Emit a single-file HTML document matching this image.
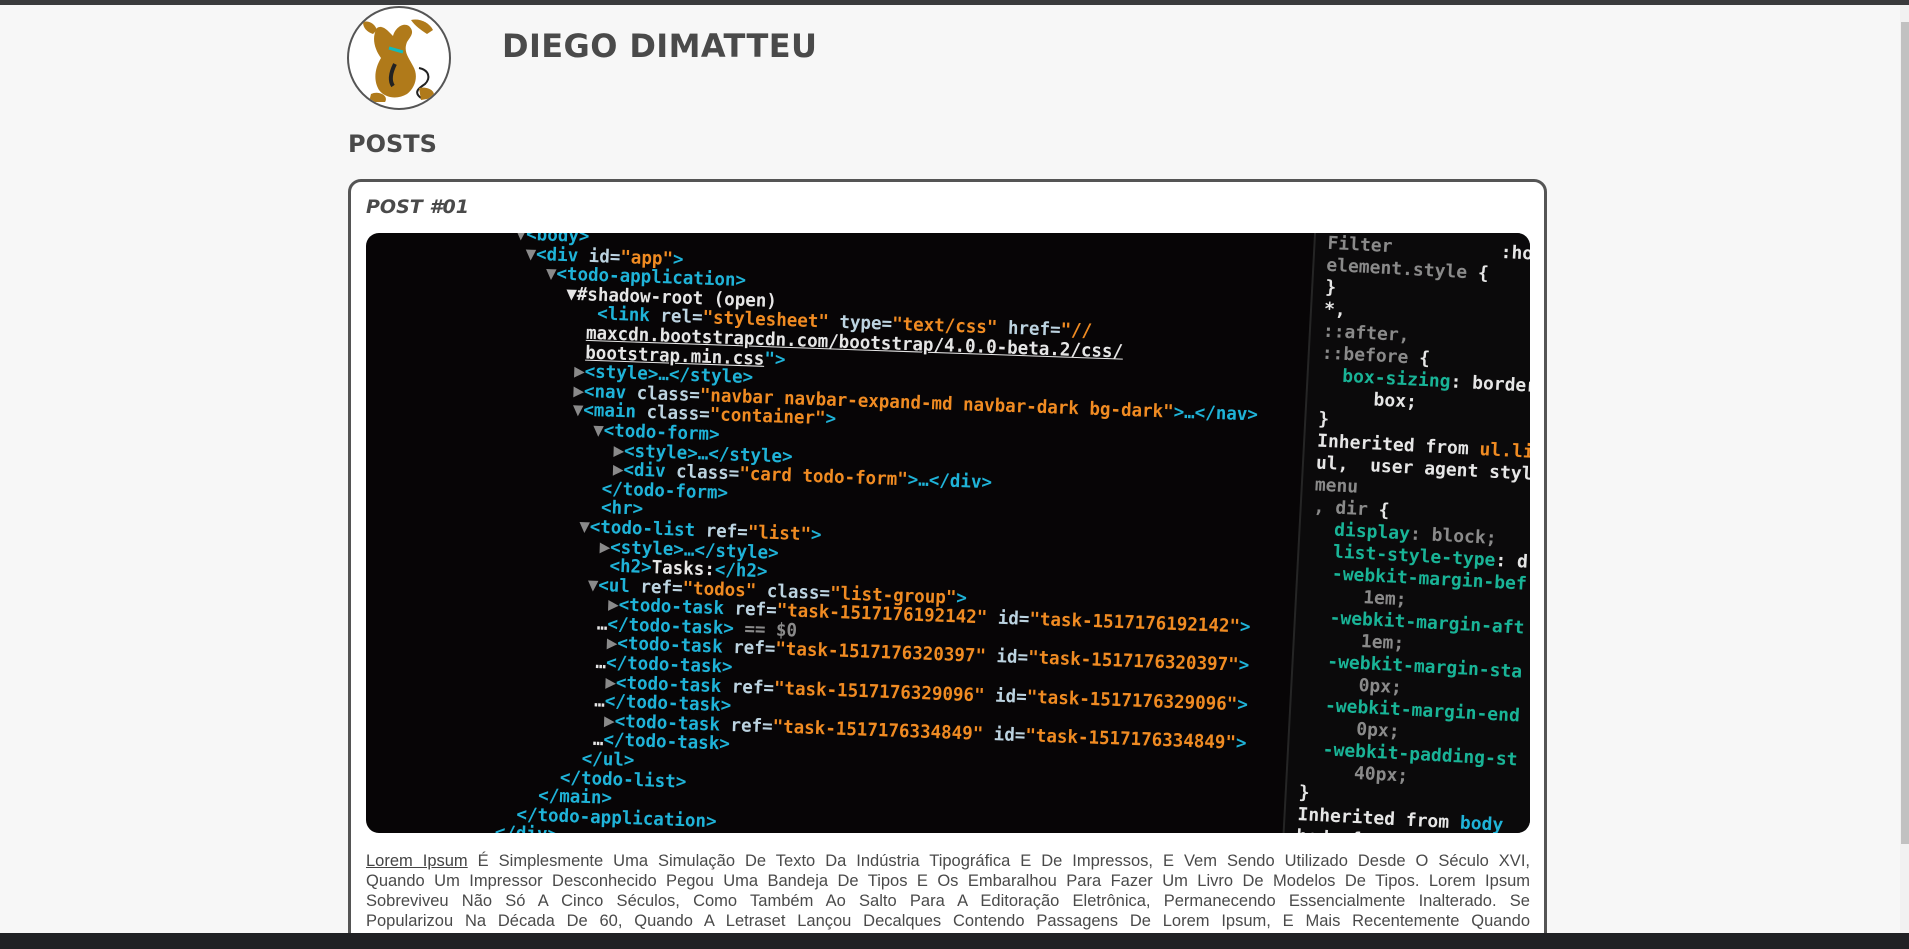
<!DOCTYPE html>
<html><head><meta charset="utf-8">
<style>
html,body{margin:0;padding:0;width:1909px;height:949px;overflow:hidden;}
body{background:#f7f7f7;position:relative;font-family:"DejaVu Sans","Liberation Sans",sans-serif;color:#4a4a4a;}
.topbar{position:absolute;left:0;top:0;width:1909px;height:5px;background:#3a3b3d;}
.logo{position:absolute;left:347px;top:6px;width:100px;height:100px;border-radius:50%;border:2px solid #555;background:#fff;overflow:hidden;}
h1{position:absolute;left:502px;top:27px;margin:0;font-size:32px;font-weight:bold;color:#4a4a4a;letter-spacing:0.4px;}
h2{position:absolute;left:348px;top:130px;margin:0;font-size:24px;font-weight:bold;color:#4a4a4a;}
.card{position:absolute;left:348px;top:179px;width:1193px;height:790px;border:3px solid #555;border-radius:13px;background:#fff;}
.ptitle{position:absolute;left:366px;top:196px;font-size:19px;font-weight:bold;font-style:italic;color:#4a4a4a;}
.img{position:absolute;left:366px;top:233px;width:1164px;height:600px;border-radius:13px;background:#070506;overflow:hidden;}
.code{position:absolute;left:0;top:0;font-family:"DejaVu Sans Mono","Liberation Mono",monospace;font-weight:bold;font-size:17.5px;line-height:18.6px;white-space:pre;transform-origin:0 0;transform:rotate(2deg) scale(1,1.04);color:#ddd;}
.t{color:#1fb3d8}.s{color:#f08b22}.a{color:#bcd3e0}.w{color:#e6e6e6}.g{color:#19b497}.d{color:#8a8a8a}
.pane{position:absolute;left:932px;top:-10px;width:280px;height:640px;background:#0b0a0b;border-left:2px solid #252525;transform:rotate(3deg);}
p.txt{position:absolute;left:366px;top:851px;width:1164px;margin:0;font-family:"Liberation Sans",sans-serif;font-size:16.5px;line-height:20px;color:#4a4a4a;}
p.txt span{display:block;text-align:justify;text-align-last:justify;white-space:nowrap;}
p.txt u{color:#444;}
.task{position:absolute;left:0;top:933px;width:1909px;height:16px;background:#202124;}
.sb{position:absolute;left:1900px;top:5px;width:9px;height:928px;background:#f1f1f1;}
.sbt{position:absolute;left:1901px;top:22px;width:8px;height:822px;background:#c1c1c1;}
</style></head><body>
<div class="topbar"></div>
<div class="logo">
<svg width="100" height="100" viewBox="0 0 100 100">
<path d="M28 20 C22 30 26 42 32 50 C26 60 24 72 30 82 C36 90 48 92 58 86 C66 80 70 68 64 58 C60 50 54 44 58 34 C62 28 66 24 60 18 C54 14 46 20 44 28 C40 24 34 16 28 20Z" fill="#b07a1a"/>
<path d="M14 14 C20 12 26 16 28 22 L24 26 C18 24 14 20 14 14Z" fill="#b07a1a"/>
<path d="M62 12 C70 10 80 14 84 22 L78 26 C72 22 66 18 62 12Z" fill="#b07a1a"/>
<path d="M40 40 L54 44" stroke="#1bb" stroke-width="3"/>
<path d="M46 56 C42 64 40 72 44 78" stroke="#222" stroke-width="4" fill="none"/>
<path d="M70 60 C80 62 82 70 76 76 C70 80 64 84 72 90" stroke="#222" stroke-width="2" fill="none"/>
<path d="M22 86 C30 82 40 88 36 94 L20 94Z" fill="#b07a1a"/>
<path d="M70 80 C80 78 88 84 84 90 L72 92Z" fill="#b07a1a"/>
</svg>
</div>
<h1>DIEGO DIMATTEU</h1>
<h2>POSTS</h2>
<div class="card"></div>
<div class="ptitle">POST #01</div>
<div class="img">
<div class="code" style="left:150px;top:-8px;"><span class="d">▼</span><span class="t">&lt;body&gt;</span>
 <span class="d">▼</span><span class="t">&lt;div </span><span class="a">id=</span><span class="s">"app"</span><span class="t">&gt;</span>
   <span class="d">▼</span><span class="t">&lt;todo-application&gt;</span>
     <span class="w">▼#shadow-root (open)</span>
        <span class="t">&lt;link </span><span class="a">rel=</span><span class="s">"stylesheet"</span><span class="a"> type=</span><span class="s">"text/css"</span><span class="a"> href=</span><span class="s">"//</span>
       <span class="w"><u>maxcdn.bootstrapcdn.com/bootstrap/4.0.0-beta.2/css/</u></span>
       <span class="w"><u>bootstrap.min.css</u></span><span class="t">"&gt;</span>
      <span class="d">▶</span><span class="t">&lt;style&gt;…&lt;/style&gt;</span>
      <span class="d">▶</span><span class="t">&lt;nav </span><span class="a">class=</span><span class="s">"navbar navbar-expand-md navbar-dark bg-dark"</span><span class="t">&gt;…&lt;/nav&gt;</span>
      <span class="d">▼</span><span class="t">&lt;main </span><span class="a">class=</span><span class="s">"container"</span><span class="t">&gt;</span>
        <span class="d">▼</span><span class="t">&lt;todo-form&gt;</span>
          <span class="d">▶</span><span class="t">&lt;style&gt;…&lt;/style&gt;</span>
          <span class="d">▶</span><span class="t">&lt;div </span><span class="a">class=</span><span class="s">"card todo-form"</span><span class="t">&gt;…&lt;/div&gt;</span>
         <span class="t">&lt;/todo-form&gt;</span>
         <span class="t">&lt;hr&gt;</span>
       <span class="d">▼</span><span class="t">&lt;todo-list </span><span class="a">ref=</span><span class="s">"list"</span><span class="t">&gt;</span>
         <span class="d">▶</span><span class="t">&lt;style&gt;…&lt;/style&gt;</span>
          <span class="t">&lt;h2&gt;</span><span class="w">Tasks:</span><span class="t">&lt;/h2&gt;</span>
        <span class="d">▼</span><span class="t">&lt;ul </span><span class="a">ref=</span><span class="s">"todos"</span><span class="a"> class=</span><span class="s">"list-group"</span><span class="t">&gt;</span>
          <span class="d">▶</span><span class="t">&lt;todo-task </span><span class="a">ref=</span><span class="s">"task-1517176192142"</span><span class="a"> id=</span><span class="s">"task-1517176192142"</span><span class="t">&gt;</span>
         <span class="w">…</span><span class="t">&lt;/todo-task&gt;</span><span class="d"> == $0</span>
          <span class="d">▶</span><span class="t">&lt;todo-task </span><span class="a">ref=</span><span class="s">"task-1517176320397"</span><span class="a"> id=</span><span class="s">"task-1517176320397"</span><span class="t">&gt;</span>
         <span class="w">…</span><span class="t">&lt;/todo-task&gt;</span>
          <span class="d">▶</span><span class="t">&lt;todo-task </span><span class="a">ref=</span><span class="s">"task-1517176329096"</span><span class="a"> id=</span><span class="s">"task-1517176329096"</span><span class="t">&gt;</span>
         <span class="w">…</span><span class="t">&lt;/todo-task&gt;</span>
          <span class="d">▶</span><span class="t">&lt;todo-task </span><span class="a">ref=</span><span class="s">"task-1517176334849"</span><span class="a"> id=</span><span class="s">"task-1517176334849"</span><span class="t">&gt;</span>
         <span class="w">…</span><span class="t">&lt;/todo-task&gt;</span>
        <span class="t">&lt;/ul&gt;</span>
      <span class="t">&lt;/todo-list&gt;</span>
    <span class="t">&lt;/main&gt;</span>
  <span class="t">&lt;/todo-application&gt;</span>
<span class="t">&lt;/div&gt;</span>
<span class="t">&lt;script src="</span></div>
<div class="pane"><div class="code" style="left:12px;top:16px;transform:none;font-size:18px;line-height:22px;"><span class="d">Filter          </span><span class="w">:hov</span>
<span class="d">element.style </span><span class="w">{</span>
<span class="w">}</span>
<span class="w">*,</span>
<span class="d">::after,</span>
<span class="d">::before </span><span class="w">{</span>
  <span class="g">box-sizing</span><span class="w">: border-</span>
     <span class="w">box;</span>
<span class="w">}</span>
<span class="w">Inherited from </span><span class="s">ul.list</span>
<span class="w">ul,  user agent style</span>
<span class="d">menu</span>
<span class="d">, dir </span><span class="w">{</span>
  <span class="g">display</span><span class="d">: block;</span>
  <span class="g">list-style-type</span><span class="w">: d</span>
  <span class="g">-webkit-margin-bef</span>
     <span class="d">1em;</span>
  <span class="g">-webkit-margin-aft</span>
     <span class="d">1em;</span>
  <span class="g">-webkit-margin-sta</span>
     <span class="d">0px;</span>
  <span class="g">-webkit-margin-end</span>
     <span class="d">0px;</span>
  <span class="g">-webkit-padding-st</span>
     <span class="d">40px;</span>
<span class="w">}</span>
<span class="w">Inherited from </span><span class="t">body</span>
<span class="w">body {</span></div></div>
</div>
<p class="txt"><span><u>Lorem Ipsum</u> É Simplesmente Uma Simulação De Texto Da Indústria Tipográfica E De Impressos, E Vem Sendo Utilizado Desde O Século XVI,</span><span>Quando Um Impressor Desconhecido Pegou Uma Bandeja De Tipos E Os Embaralhou Para Fazer Um Livro De Modelos De Tipos. Lorem Ipsum</span><span>Sobreviveu Não Só A Cinco Séculos, Como Também Ao Salto Para A Editoração Eletrônica, Permanecendo Essencialmente Inalterado. Se</span><span>Popularizou Na Década De 60, Quando A Letraset Lançou Decalques Contendo Passagens De Lorem Ipsum, E Mais Recentemente Quando</span><span>Passou A Ser Integrado A Softwares De Editoração Eletrônica Como Aldus PageMaker.</span></p>
<div class="sb"></div><div class="sbt"></div>
<div class="task"></div>
</body></html>
